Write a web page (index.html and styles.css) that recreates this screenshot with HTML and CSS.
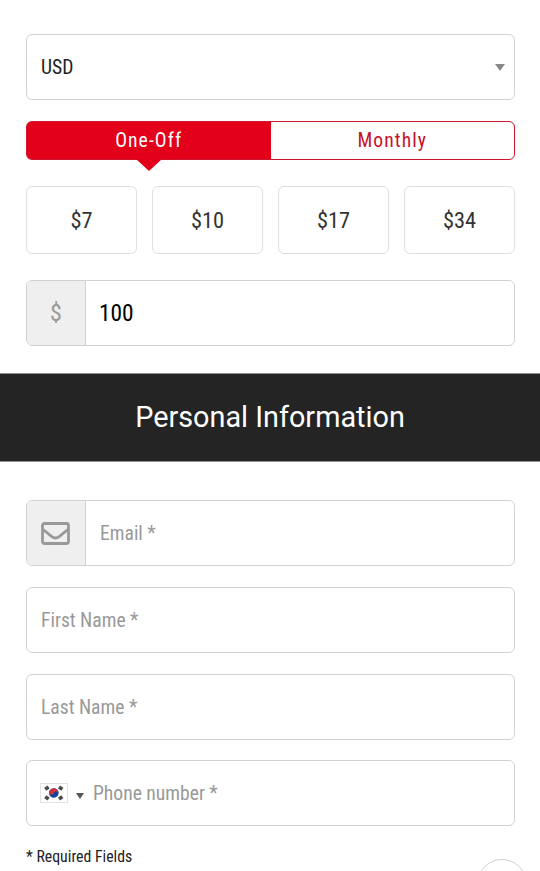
FILE: index.html
```
<!DOCTYPE html>
<html lang="en">
<head>
    <meta charset="UTF-8">
    <meta name="viewport" content="width=device-width, initial-scale=1.0">
    <title>Donate</title>
    <link rel="stylesheet" href="styles.css">
</head>
<body>
    <div class="section donation">
        <div class="field currency">
            <span class="value">USD</span>
            <span class="select-arrow"></span>
        </div>
        <div class="tabs">
            <div class="tab active"><span>One-Off</span></div>
            <div class="tab"><span>Monthly</span></div>
        </div>
        <div class="amounts">
            <div class="amount">$7</div>
            <div class="amount">$10</div>
            <div class="amount">$17</div>
            <div class="amount">$34</div>
        </div>
        <div class="field amount-field">
            <div class="addon">$</div>
            <span class="amount-value">100</span>
        </div>
    </div>
    <h2 class="heading">Personal Information</h2>
    <div class="section personal">
        <div class="field">
            <div class="addon">
                <svg class="mail" viewBox="0 0 29 23">
                    <rect x="1.5" y="1.5" width="26" height="20" rx="2"/>
                    <path d="M1.5 7 L10.8 14.6 Q14.5 17.4 18.2 14.6 L27.5 7"/>
                </svg>
            </div>
            <span class="placeholder">Email *</span>
        </div>
        <div class="field name"><span class="placeholder">First Name *</span></div>
        <div class="field name"><span class="placeholder">Last Name *</span></div>
        <div class="field phone">
            <svg class="flag" viewBox="0 0 28 20">
                <rect x="0.5" y="0.5" width="27" height="19" fill="#fff" stroke="#e2e2e2"/>
                <g stroke="#4c4c50" stroke-width="3.6">
                    <path d="M5.2 6.3 L8.6 4"/>
                    <path d="M19 4 L22.4 6.3"/>
                    <path d="M5.2 13.7 L8.6 16"/>
                    <path d="M19 16 L22.4 13.7"/>
                </g>
                <g transform="rotate(20 13.8 10)">
                    <circle cx="13.8" cy="10" r="4.8" fill="#15459b"/>
                    <path d="M9 10 A4.8 4.8 0 0 1 18.6 10 A2.4 2.4 0 0 0 13.8 10 A2.4 2.4 0 0 1 9 10z" fill="#cd3440"/>
                </g>
            </svg>
            <span class="phone-arrow"></span>
            <span class="placeholder">Phone number *</span>
        </div>
        <div class="required">* Required Fields</div>
    </div>
    <div class="scroll-top"></div>
</body>
</html>
```
FILE: styles.css
```
* {
    box-sizing: border-box;
}
body {
    margin: 0;
    height: 871px;
    overflow: hidden;
    background: #fff;
    color: #222;
    font-family: "Roboto Condensed", Roboto, sans-serif;
    font-stretch: 75%;
    font-size: 19.6px;
}
.section {
    display: flex;
    flex-direction: column;
    padding: 0 25px 0 26px;
}
.donation {
    padding-top: 34px;
}
.field {
    display: flex;
    align-items: center;
    height: 66px;
    border: 1px solid #d2d2d2;
    border-radius: 6px;
    overflow: hidden;
}
.currency {
    justify-content: space-between;
    padding: 0 9px 0 14px;
}
.select-arrow {
    border: 5.5px solid transparent;
    border-top: 7px solid #888;
    border-bottom: 0;
}
.tabs {
    display: flex;
    height: 39px;
    margin-top: 21px;
    border: 1px solid #d0162c;
    border-radius: 6px;
}
.tab {
    position: relative;
    flex: 1;
    display: flex;
    align-items: center;
    justify-content: center;
    padding-bottom: 1px;
    color: #c8102a;
    letter-spacing: 1.1px;
}
.tab.active {
    background: #e2001a;
    color: #fff;
    border-radius: 4px 0 0 4px;
}
.tab.active::after {
    content: "";
    position: absolute;
    top: 100%;
    left: 50%;
    margin-left: -13px;
    border: 13px solid transparent;
    border-top: 12px solid #e2001a;
    border-bottom: 0;
}
.amounts {
    display: grid;
    grid-template-columns: repeat(4, 1fr);
    gap: 15px;
    margin: 26px 0;
}
.amount {
    display: flex;
    align-items: center;
    justify-content: center;
    height: 68px;
    padding-bottom: 1px;
    border: 1px solid #dfdfdd;
    border-radius: 6px;
    font-size: 22.4px;
    color: #333;
}
.addon {
    display: flex;
    align-items: center;
    justify-content: center;
    width: 59px;
    height: 100%;
    background: #efefef;
    border-right: 1px solid #d2d2d2;
    font-size: 24px;
    color: #999;
}
.amount-value {
    margin-left: 13px;
    font-size: 23.4px;
    color: #000;
}
.heading {
    display: flex;
    align-items: center;
    justify-content: center;
    height: 89px;
    margin: 27px 0 38.4px;
    padding-bottom: 1px;
    background: #242424;
    border: solid #8f8f8f;
    border-width: 1px 0;
    color: #fff;
    font-family: Roboto, sans-serif;
    font-stretch: 100%;
    font-size: 28.8px;
    font-weight: 400;
}
.personal {
    gap: 20.6px;
}
.mail {
    width: 29px;
    height: 23px;
    margin-right: 1px;
    fill: none;
    stroke: #999;
    stroke-width: 2.8;
}
.placeholder {
    margin-left: 14px;
    color: #999;
}
.name {
    padding-top: 1.5px;
}
.phone {
    padding-left: 13px;
}
.flag {
    width: 28px;
    height: 20px;
}
.phone-arrow {
    margin: 5px 0 0 8px;
    border: 4.5px solid transparent;
    border-top: 6px solid #555;
    border-bottom: 0;
}
.phone .placeholder {
    margin-left: 9px;
}
.required {
    font-size: 15.8px;
}
.scroll-top {
    position: absolute;
    top: 859px;
    left: 477px;
    width: 50px;
    height: 50px;
    border: 1px solid #d0d0d0;
    border-radius: 50%;
    background: #fff;
}
```
